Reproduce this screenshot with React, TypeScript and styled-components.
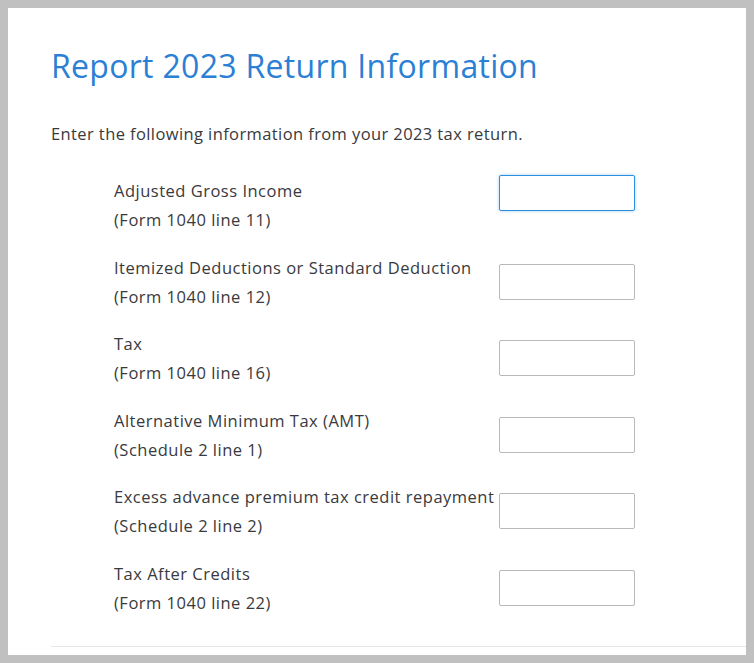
import { createGlobalStyle, styled } from "styled-components";

const GlobalStyle = createGlobalStyle`
  body {
    margin: 0;
    background-color: #c0c0c0;
    font-family: "Open Sans", "Noto Sans", sans-serif;
  }
`;

const Frame = styled.div`
  padding: 8px;
  height: 663px;
  box-sizing: border-box;
`;

const Panel = styled.div`
  height: 647px;
  background-color: #ffffff;
  padding: 38px 0 0 43px;
  box-sizing: border-box;
  overflow: hidden;
`;

const Title = styled.h1`
  margin: 0;
  font-size: 32px;
  line-height: 40px;
  font-weight: 400;
  letter-spacing: 0.3px;
  color: #2b7fd4;
`;

const Intro = styled.p`
  margin: 36px 0 0;
  font-size: 16.5px;
  line-height: 24px;
  letter-spacing: 0.4px;
  color: #393a3d;
`;

const Fields = styled.div`
  display: flex;
  flex-direction: column;
  gap: 18.6px;
  margin-top: 29px;
  padding-left: 63px;
`;

const Row = styled.div`
  display: grid;
  grid-template-columns: 385px 136px;
  align-items: center;
`;

const Label = styled.div`
  font-size: 16.5px;
  line-height: 29px;
  letter-spacing: 0.5px;
  color: #393a3d;
  white-space: nowrap;
`;

const Input = styled.input<{ $focused?: boolean }>`
  width: 136px;
  height: 36px;
  box-sizing: border-box;
  border: 1px solid ${(p) => (p.$focused ? "#2d8fe0" : "#b9b9b9")};
  border-radius: 2px;
  box-shadow: ${(p) => (p.$focused ? "0 0 3px rgba(45, 143, 224, 0.5)" : "none")};
  margin-bottom: ${(p) => (p.$focused ? "23px" : "0")};
  outline: none;
  padding: 0 8px;
  font-size: 16px;
`;

const Divider = styled.hr`
  margin: 29.5px 0 0;
  border: none;
  border-top: 1px solid #e6e6e6;
`;

const fields = [
  { name: "Adjusted Gross Income", ref: "(Form 1040 line 11)" },
  { name: "Itemized Deductions or Standard Deduction", ref: "(Form 1040 line 12)" },
  { name: "Tax", ref: "(Form 1040 line 16)" },
  { name: "Alternative Minimum Tax (AMT)", ref: "(Schedule 2 line 1)" },
  { name: "Excess advance premium tax credit repayment", ref: "(Schedule 2 line 2)" },
  { name: "Tax After Credits", ref: "(Form 1040 line 22)" },
];

export default function App() {
  return (
    <>
      <GlobalStyle />
      <Frame>
        <Panel>
          <Title>Report 2023 Return Information</Title>
          <Intro>Enter the following information from your 2023 tax return.</Intro>
          <Fields>
            {fields.map((f, i) => (
              <Row key={f.name}>
                <Label>
                  {f.name}
                  <br />
                  {f.ref}
                </Label>
                <Input type="text" aria-label={f.name} $focused={i === 0} />
              </Row>
            ))}
          </Fields>
          <Divider />
        </Panel>
      </Frame>
    </>
  );
}
